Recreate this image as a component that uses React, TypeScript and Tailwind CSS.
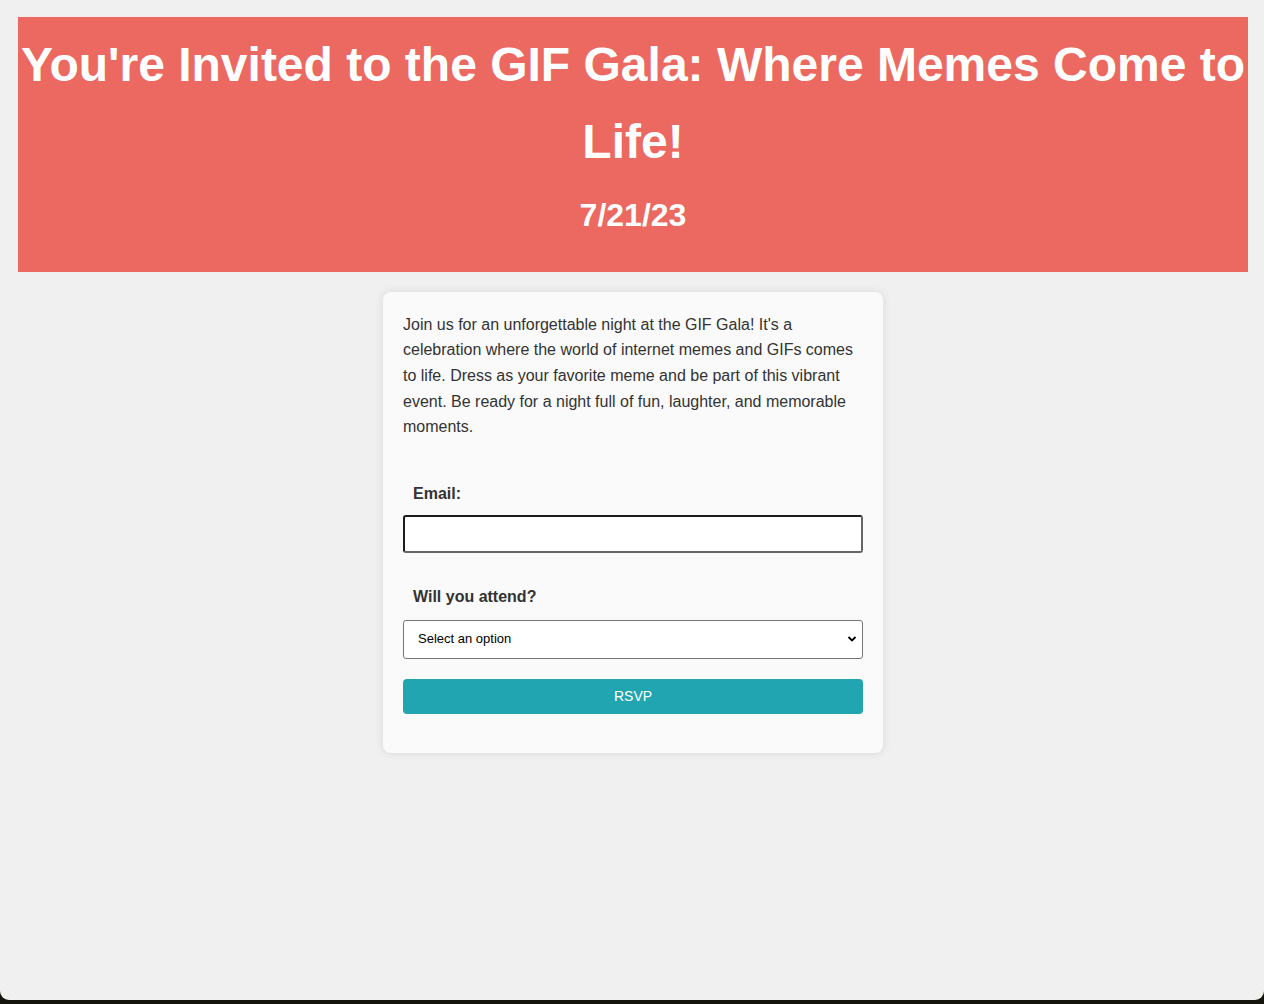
import React from "react";

export default function App() {
  return (
    <div className="h-[1004px] w-[1264px] bg-[#14140c] overflow-hidden" style={{ fontFamily: '"Liberation Sans", Arial, sans-serif' }}>
      <div className="h-[1000px] bg-[#f0f0f0] rounded-b-[9px] pl-[18px] pr-[16px] pt-[17px] leading-[1.6] text-[#333]">
        <header className="bg-[#eb6960] text-white text-center pt-[10px] pb-[31px]">
          <h1 className="text-[48px] font-bold leading-[1.6] m-0">
            You're Invited to the GIF Gala: Where Memes Come to Life!
          </h1>
          <h2 className="text-[32px] font-bold leading-[1.6] mt-[9px]">7/21/23</h2>
        </header>
        <main className="flex justify-center pt-[20px]">
          <div className="w-[500px] bg-[#fafafa] rounded-[8px] shadow-[0_0_10px_rgba(0,0,0,0.1)] p-[20px] pb-[39px]">
            <p className="text-[16px] leading-[1.6]">
              Join us for an unforgettable night at the GIF Gala! It's a celebration where the world of internet memes and GIFs comes to life. Dress as your favorite meme and be part of this vibrant event. Be ready for a night full of fun, laughter, and memorable moments.
            </p>
            <form className="mt-[41px]" onSubmit={(e) => e.preventDefault()}>
              <label className="block px-[10px] font-bold text-[16px] leading-[1.6]">Email:</label>
              <input
                type="email"
                className="block w-full h-[38px] mt-[9px] bg-white rounded-[3px] border-2 border-t-[#1c1c1c] border-l-[#1c1c1c] border-r-[#666] border-b-[#666] outline-none"
              />
              <label className="block mt-[31px] px-[10px] font-bold text-[16px] leading-[1.6]">Will you attend?</label>
              <div className="relative mt-[10px]">
                <select
                  defaultValue=""
                  className="block w-full h-[39px] appearance-none bg-white border border-[#767676] rounded-[3px] pl-[14px] text-[13px] text-black outline-none"
                >
                  <option value="">Select an option</option>
                  <option value="yes">Yes</option>
                  <option value="no">No</option>
                </select>
                <svg className="absolute right-[6px] top-[15px] pointer-events-none" width="10" height="8" viewBox="0 0 10 8">
                  <path d="M1.5 2 L5 5.5 L8.5 2" stroke="#000" strokeWidth="1.8" fill="none" />
                </svg>
              </div>
              <button
                type="submit"
                className="block w-full h-[35px] mt-[20px] bg-[#21a5b1] text-white text-[14px] rounded-[4px]"
              >
                RSVP
              </button>
            </form>
          </div>
        </main>
      </div>
    </div>
  );
}
